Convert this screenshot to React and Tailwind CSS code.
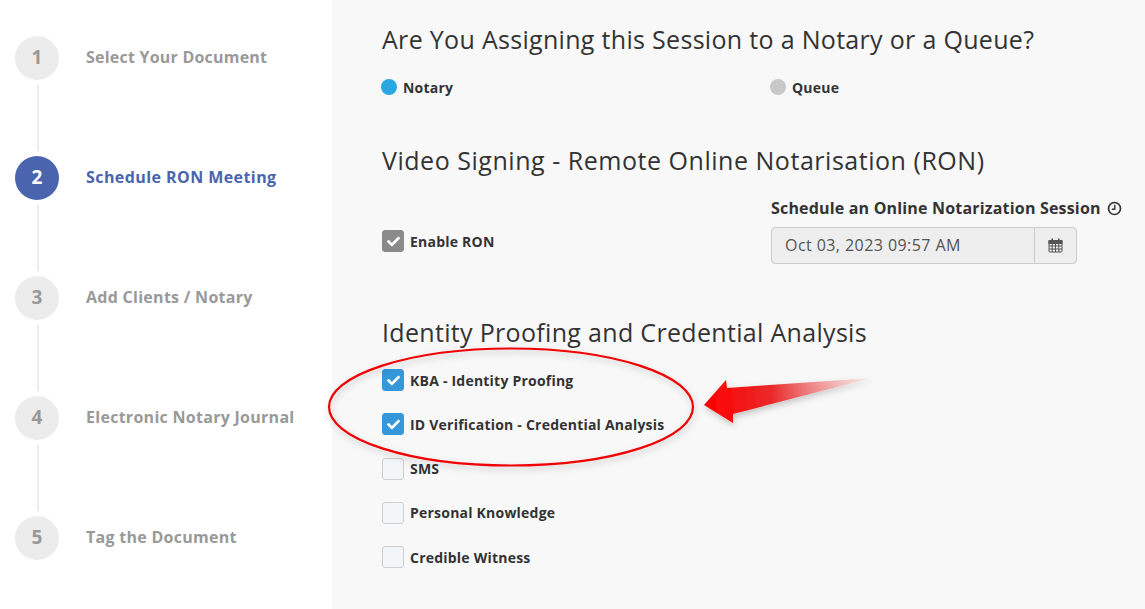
import React from "react";
import { FaCheck } from "react-icons/fa";

const steps = [
  ["1", "Select Your Document", "tracking-[0.22px]"],
  ["2", "Schedule RON Meeting", "tracking-[0.43px]"],
  ["3", "Add Clients / Notary", "tracking-[0.28px]"],
  ["4", "Electronic Notary Journal", "tracking-[0.28px]"],
  ["5", "Tag the Document", "tracking-[0.28px]"],
];

function Step({ n, label, spacing, last }) {
  const active = n === "2";
  return (
    <div className={last ? "h-[44px]" : "h-[120px]"}>
      <div className="flex items-center h-[44px]">
        <div className={`w-[44px] h-[44px] rounded-full flex items-center justify-center text-[19px] font-bold pb-[2px] ${active ? "bg-[#4a64ae] text-white" : "bg-[#ececec] text-[#999999]"}`}>{n}</div>
        <div className={`ml-[27px] pb-[2px] text-[16px] font-bold whitespace-nowrap ${spacing} ${active ? "text-[#4a64ae]" : "text-[#999999]"}`}>{label}</div>
      </div>
      {!last && <div className="w-[2px] h-[66px] mt-[5px] ml-[22px] bg-[#ececec]" />}
    </div>
  );
}

function Check({ label, kind }) {
  const box = kind === "blue" ? "bg-[#3498db] border-[#3498db]" : kind === "gray" ? "bg-[#8a8a8a] border-[#8a8a8a]" : "bg-[#f3f6f9] border-[#cfcfcf]";
  return (
    <div className="flex items-center h-[22px]">
      <div className={`w-[22px] h-[22px] rounded-[3px] border flex items-center justify-center ${box}`}>
        {kind && <FaCheck className="text-white w-[13px] h-[13px]" />}
      </div>
      <span className="ml-[6px] text-[14px] font-bold tracking-[0.22px] text-[#333333] whitespace-nowrap">{label}</span>
    </div>
  );
}

function ClockIcon() {
  return (
    <svg className="ml-[6px]" width="15" height="15" viewBox="0 0 15 15" fill="none" stroke="#333333">
      <circle cx="7.5" cy="7.5" r="6" strokeWidth="1.7" />
      <path d="M7.8 3.8 V8.2 H4.8" strokeWidth="1.4" />
    </svg>
  );
}

function CalendarIcon() {
  return (
    <svg width="15" height="15" viewBox="0 0 15 15" fill="none" stroke="#555555" strokeWidth="1">
      <rect x="1" y="2.5" width="13" height="11.5" rx="1" />
      <rect x="1" y="2.5" width="13" height="3" fill="#555555" />
      <path d="M1 8 H14 M1 11 H14 M4.2 5.5 V14 M7.5 5.5 V14 M10.8 5.5 V14" />
      <path d="M4.2 0.5 V3.5 M10.8 0.5 V3.5" strokeWidth="1.6" />
    </svg>
  );
}

const heading = "h-[34px] leading-[34px] text-[25px] font-medium text-[#333333] whitespace-nowrap";

export default function App() {
  return (
    <div className="relative flex w-[1145px] h-[609px] overflow-hidden bg-white text-[#333333] font-['Open_Sans',sans-serif]">
      <aside className="w-[332px] shrink-0 pl-[15px] pt-[36px]">
        {steps.map(([n, l, s], i) => <Step key={n} n={n} label={l} spacing={s} last={i === 4} />)}
      </aside>
      <main className="flex-1 bg-[#f8f8f8] pl-[49px]">
        <h2 className={`mt-[22px] pl-[1px] tracking-[0.31px] ${heading}`}>Are You Assigning this Session to a Notary or a Queue?</h2>
        <div className="mt-[22px] flex h-[18px] items-center">
          <div className="w-[389px] flex items-center">
            <span className="w-[16px] h-[16px] rounded-full bg-[#29a7e1]" />
            <span className="ml-[6px] text-[14px] font-bold tracking-[0.22px]">Notary</span>
          </div>
          <div className="flex items-center">
            <span className="w-[16px] h-[16px] rounded-full bg-[#c8c8c8]" />
            <span className="ml-[6px] text-[14px] font-bold tracking-[0.22px]">Queue</span>
          </div>
        </div>
        <h2 className={`mt-[47px] pl-[1px] tracking-[0.53px] ${heading}`}>Video Signing - Remote Online Notarisation (RON)</h2>
        <div className="flex mt-[21px] h-[83px]">
          <div className="w-[390px] pl-[1px] pt-[32px]">
            <Check label="Enable RON" kind="gray" />
          </div>
          <div>
            <div className="flex items-center h-[20px] text-[16px] font-bold tracking-[0.18px] whitespace-nowrap">
              Schedule an Online Notarization Session
              <ClockIcon />
            </div>
            <div className="mt-[9px] flex w-[306px] h-[37px] rounded-[4px] border border-[#cccccc] bg-[#eeeeee]">
              <div className="flex-1 pl-[13px] leading-[35px] text-[16px] tracking-[0.43px] text-[#555555]">Oct 03, 2023 09:57 AM</div>
              <div className="w-[42px] border-l border-[#cccccc] flex items-center justify-center">
                <CalendarIcon />
              </div>
            </div>
          </div>
        </div>
        <h2 className={`mt-[34px] pl-[1px] tracking-[0.32px] ${heading}`}>Identity Proofing and Credential Analysis</h2>
        <div className="mt-[20px] pl-[1px] flex flex-col gap-[22.3px]">
          <Check label="KBA - Identity Proofing" kind="blue" />
          <Check label="ID Verification - Credential Analysis" kind="blue" />
          <Check label="SMS" />
          <Check label="Personal Knowledge" />
          <Check label="Credible Witness" />
        </div>
      </main>
      <svg className="absolute left-0 top-0 pointer-events-none" width="1145" height="609" viewBox="0 0 1145 609">
        <defs>
          <linearGradient id="arrowFill" x1="705" y1="400" x2="872" y2="380" gradientUnits="userSpaceOnUse">
            <stop offset="0" stopColor="#ff0000" />
            <stop offset="0.4" stopColor="#e92a2a" />
            <stop offset="1" stopColor="#f8e8e8" stopOpacity="0.6" />
          </linearGradient>
          <filter id="soft" x="-20%" y="-20%" width="140%" height="150%">
            <feDropShadow dx="1" dy="3" stdDeviation="3" floodColor="#000000" floodOpacity="0.22" />
          </filter>
        </defs>
        <ellipse cx="511" cy="407" rx="182" ry="58.5" fill="none" stroke="#f00000" strokeWidth="2.2" filter="url(#soft)" />
        <path d="M704 405 L726 380 L727 388 L872 378 L733 414 L733 423 Z" fill="url(#arrowFill)" filter="url(#soft)" />
      </svg>
    </div>
  );
}
